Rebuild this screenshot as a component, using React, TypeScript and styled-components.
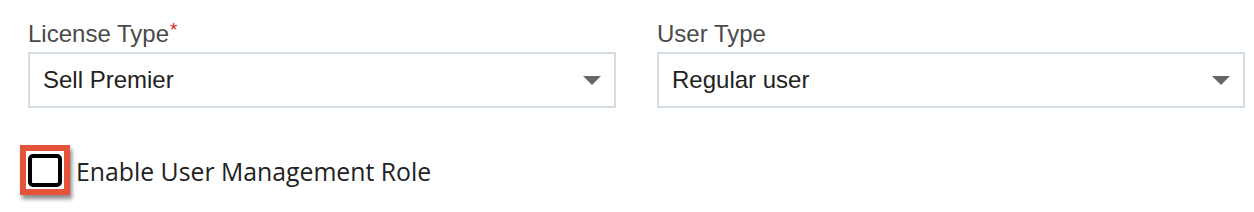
import React from "react";
import styled, { createGlobalStyle } from "styled-components";

const Global = createGlobalStyle`
  html, body { margin: 0; padding: 0; background: #fff; }
  body { font-family: "Liberation Sans", Arial, sans-serif; }
`;

const Page = styled.div`
  width: 1254px;
  height: 212px;
  box-sizing: border-box;
  padding: 20px 10px 0 28px;
  display: flex;
  flex-direction: column;
`;

const Row = styled.div`
  display: grid;
  grid-template-columns: 588px 588px;
  column-gap: 41px;
`;

const Field = styled.div`
  display: flex;
  flex-direction: column;
  gap: 4px;
`;

const Label = styled.div`
  font-size: 24px;
  line-height: 28px;
  color: #4a4a4a;
  display: flex;
  align-items: flex-start;
`;

const Required = styled.span`
  color: #e0201c;
  font-size: 19px;
  line-height: 18px;
  margin-left: 1px;
  margin-top: 1px;
`;

const Select = styled.div`
  box-sizing: border-box;
  height: 56px;
  border: 2px solid #d3dde5;
  display: flex;
  align-items: center;
  justify-content: space-between;
  padding: 0 13px 0 13px;
  font-size: 24px;
  color: #222;
`;

const Caret = styled.svg`
  width: 18px;
  height: 9px;
  flex: none;
`;

const CheckRow = styled.div`
  margin-top: 37px;
  margin-left: -8px;
  display: flex;
  align-items: center;
  gap: 6px;
`;

const Highlight = styled.div`
  box-sizing: border-box;
  width: 50px;
  height: 50px;
  border: 6px solid #e5533a;
  background: #fff;
  box-shadow: 2px 4px 4px rgba(0, 0, 0, 0.45);
  display: flex;
  align-items: center;
  justify-content: center;
`;

const Box = styled.div`
  box-sizing: border-box;
  width: 34px;
  height: 33px;
  border: 4px solid #000;
  border-radius: 5px;
  background: #fff;
`;

const CheckLabel = styled.span`
  font-family: "Open Sans", "Noto Sans", sans-serif;
  font-size: 24.8px;
  color: #222;
  margin-top: 2px;
`;

const SelectField = ({ label, value, required }: { label: string; value: string; required?: boolean }) => (
  <Field>
    <Label>
      {label}
      {required && <Required>*</Required>}
    </Label>
    <Select>
      <span>{value}</span>
      <Caret viewBox="0 0 18 9">
        <path d="M0 0 H18 L9 9 Z" fill="#666" />
      </Caret>
    </Select>
  </Field>
);

export default function App() {
  return (
    <>
      <Global />
      <Page>
        <Row>
          <SelectField label="License Type" value="Sell Premier" required />
          <SelectField label="User Type" value="Regular user" />
        </Row>
        <CheckRow>
          <Highlight>
            <Box />
          </Highlight>
          <CheckLabel>Enable User Management Role</CheckLabel>
        </CheckRow>
      </Page>
    </>
  );
}
